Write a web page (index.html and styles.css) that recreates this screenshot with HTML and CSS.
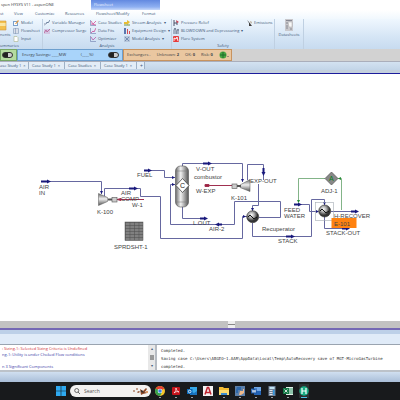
FILE: index.html
```html
<!DOCTYPE html>
<html lang="en">
<head>
	<meta charset="utf-8">
	<title>Aspen HYSYS V11 - aspenONE</title>
	<link rel="stylesheet" href="styles.css">
</head>
<body>
	<div class="app">
		<header class="titlebar">
			<span class="title">spen HYSYS V11 - aspenONE</span>
			<span class="context-tab">Flowsheet</span>
		</header>

		<nav class="menu">
			<a href="#" class="menu-first">st</a>
			<a href="#" class="menu-view">View</a>
			<a href="#" class="menu-customize">Customize</a>
			<a href="#" class="menu-resources">Resources</a>
			<a href="#" class="menu-modify">Flowsheet/Modify</a>
			<a href="#">Format</a>
		</nav>

		<div class="ribbon">
			<section class="group group-summaries">
				<div class="tools">
					<button class="big big-cut">
						<svg width="8" height="12" viewBox="0 0 8 12"><path d="M0 2h6v9H0z" fill="#f3c04e"/><path d="M0 4h6v3H0z" fill="#fbe6a0"/><path d="M0 2h6v9H0" fill="none" stroke="#d2953a" stroke-width=".6"/></svg>
						<span>nents</span>
					</button>
					<div class="col">
						<button><svg viewBox="0 0 6 6"><path d="M0 1h5v5H0z" fill="#7aa0cc"/><path d="M1 2h3v3H1z" fill="#fff"/><path d="M2 4l3-4 1 1-3 3z" fill="#e89a38"/></svg>Model</button>
						<button><svg viewBox="0 0 6 6"><path d="M.5.5h5v5h-5zM.5 2h5M.5 4h5M2.500 0v6" fill="#fff" stroke="#8095b5" stroke-width=".6"/></svg>Flowsheet</button>
						<button><svg viewBox="0 0 6 6"><path d="M1 .5h3l1 1v4H1z" fill="#fff" stroke="#a8b48a" stroke-width=".6"/></svg>Input</button>
					</div>
				</div>
				<h2>ummaries</h2>
			</section>
			<section class="group group-analysis">
				<div class="tools">
					<div class="col col-wide">
						<button><svg viewBox="0 0 6 6"><path d="M0 5l2-1 1-2 1 1 2-3" fill="none" stroke="#53698c" stroke-width=".8"/><path d="M0 3h2v2H0z" fill="#b6bfd0"/></svg>Variable Manager</button>
						<button><svg viewBox="0 0 6 6"><path d="M0 1h6v5H0z" fill="#d2c5e2"/><path d="M0 5l2-3 1 2 3-3" fill="none" stroke="#b85b92" stroke-width=".8"/></svg>Compressor Surge</button>
					</div>
					<div class="col col-case">
						<button><svg viewBox="0 0 6 6"><path d="M.5 0v5.500H6" fill="none" stroke="#7889b6" stroke-width=".7"/><path d="M1 1l2 3 3-3M1 4l5 1" fill="none" stroke="#d45096" stroke-width=".8"/></svg>Case Studies</button>
						<button><svg viewBox="0 0 6 6"><path d="M.5 0v5.500H6" fill="none" stroke="#7889b6" stroke-width=".7"/><path d="M1 5l2-2 1 1 2-4" fill="none" stroke="#c94c98" stroke-width=".8"/></svg>Data Fits</button>
						<button><svg viewBox="0 0 6 6"><path d="M.5 0v5.500H6" fill="none" stroke="#7889b6" stroke-width=".7"/><path d="M1 1l2 3 3-3" fill="none" stroke="#b95ba6" stroke-width=".8"/></svg>Optimizer</button>
					</div>
					<div class="col">
						<button><svg viewBox="0 0 6 6"><path d="M0 2h3V0l3 2-3 3V4H0z" fill="#e7bd35"/><path d="M0 5h6" stroke="#739245"/></svg>Stream Analysis <i>▾</i></button>
						<button><svg viewBox="0 0 6 6"><path d="M0 0h2v6H0z" fill="#5b78ae"/><path d="M3 1h1v5H3zM5 3h1v3H5z" fill="#d34d55"/></svg>Equipment Design <i>▾</i></button>
						<button><svg viewBox="0 0 6 6"><path d="M0 0h6v6H0z" fill="#b7c7dc"/><path d="M1 5l4-4M1 1l4 4" stroke="#6780a8" stroke-width=".8"/></svg>Model Analysis <i>▾</i></button>
					</div>
				</div>
				<h2>Analysis</h2>
			</section>
			<section class="group group-safety">
				<div class="tools">
					<div class="col col-relief">
						<button><svg viewBox="0 0 6 6"><path d="M1 0v6M1 3h3M4 1v4" stroke="#4d5168"/><path d="M3 0l3 2-2 1z" fill="#d63f50"/></svg>Pressure Relief</button>
						<button><svg viewBox="0 0 6 6"><path d="M1 6V2l1-2 1 2v4M4 6V3l1-2 1 2v3" fill="none" stroke="#68748a"/></svg>BLOWDOWN and Depressuring <i>▾</i></button>
						<button><svg viewBox="0 0 6 6"><rect width="6" height="6" rx="1" fill="#e63b3b"/><path d="M1 5V2l2 1 1-2 1 4" fill="none" stroke="#fff" stroke-width=".9"/></svg>Flare System</button>
					</div>
					<div class="col">
						<button><svg viewBox="0 0 6 6"><path d="M1 0l2 2 3 4H3V3z" fill="#403d3b"/><path d="M4 1l2 1-1 2z" fill="#b6a58b"/></svg>Emissions</button>
					</div>
				</div>
				<h2>Safety</h2>
			</section>
			<section class="group group-data">
				<button class="big">
					<svg width="10" height="12" viewBox="0 0 10 12"><path d="M1 0h8v12H1z" fill="#c9c8cc"/><path d="M2 1.500h6M2 4h6M2 7h2M2 9h2M6 10h2" stroke="#777984" stroke-width=".8"/><path d="M4 3h4v5H5z" fill="#f7f7f7" stroke="#999" stroke-width=".4"/></svg>
					<span>Datasheets</span>
				</button>
			</section>
		</div>

		<div class="status">
			<div class="panel panel-green"><button class="switch" aria-label="Capital"></button></div>
			<div class="panel panel-blue"><span>Energy Savings: ____MW</span><span>(____%)</span><button class="switch" aria-label="Energy"></button></div>
			<div class="panel panel-orange"><span>Exchangers -</span><span>Unknown: <b>2</b></span><span>OK: <b>0</b></span><span>Risk: <b>0</b></span>
				<svg width="10" height="8" viewBox="0 0 10 8"><circle cx="4" cy="4" r="3.500" fill="#49a642"/><path d="M1 4h6M4 1v6" stroke="#226b2a"/><path d="M8 5h2L9 6z" fill="#555"/></svg>
			</div>
		</div>

		<div class="tabs">
			<a href="#">ase Study 1 <i>×</i></a>
			<a href="#">Case Study 1 <i>×</i></a>
			<a href="#">Case Studies <i>×</i></a>
			<a href="#">Case Study 1 <i>×</i></a>
			<a href="#" class="plus">+</a>
		</div>

		<main class="canvas">
			<svg class="flowsheet" viewBox="0 74 400 247" preserveAspectRatio="xMinYMin meet">
				<defs>
					<linearGradient id="steel"><stop offset="0" stop-color="#666"/><stop offset=".4" stop-color="#f2f2f2"/><stop offset="1" stop-color="#555"/></linearGradient>
					<linearGradient id="cone" x2="0" y2="1"><stop offset="0" stop-color="#666"/><stop offset=".45" stop-color="#eee"/><stop offset="1" stop-color="#555"/></linearGradient>
					<radialGradient id="ball" cx=".4" cy=".35"><stop offset="0" stop-color="#fff"/><stop offset=".5" stop-color="#aaa"/><stop offset="1" stop-color="#333"/></radialGradient>
					<pattern id="cells" x="125" y="222" width="4.500" height="3" patternUnits="userSpaceOnUse"><path d="M0 0h4.500v3H0z" fill="#808080"/><path d="M0 .3h4.500M.3 0v3" stroke="#4c4c4c" stroke-width=".6"/></pattern>
				</defs>

				<!-- material streams -->
				<g class="stream">
					<path d="M41 181.500H101.500V194"/>
					<path d="M104.500 196V188.500H140.500V196.500H160.500V238.500H242.500V216.500H247"/>
					<path d="M144 170.500H164.500V177.500H175"/>
					<path d="M182.500 166V163.500H242.500V182"/>
					<path d="M182.500 207V218.500H207"/>
					<path d="M247.500 180V164.500H263.500V180"/>
					<path d="M258.500 184V205.500H252.500V211"/>
					<path d="M259 217.500H280.500V201.500H234.500V224.500H170.500V184.500H175"/>
					<path d="M252.500 223V236.500H311.500V199.500H324.500V205"/>
					<path d="M294 204.500H309.500V211.500H318"/>
					<path d="M331 211.500H358"/>
					<path d="M324.500 217V228.500H349"/>
				</g>
				<g class="energy"><path d="M119 199.500H144M205 185.500H232"/><path d="M117 199.500l4-1v2zM205 184.500h4v2h-4z"/></g>
				<g class="arrow">
					<path d="M41 180.500h6v-1l4 2-4 2v-1h-6z"/>
					<path d="M129 187.500h5v-1l4 2-4 2v-1h-5z"/>
					<path d="M144 169.500h4v-1l4 2-4 2v-1h-4z"/>
					<path d="M203 162.500h5v-1l4 2-4 2v-1h-5z"/>
					<path d="M200 217.500h4v-1l4 2-4 2v-1h-4z"/>
					<path d="M222 223.500h-3v-1l-4 2 4 2v-1h3z"/>
					<path d="M262.500 168v4h-1l2 4 2-4h-1v-4z"/>
					<path d="M286 235.500h5v-1l4 2-4 2v-1h-5z"/>
					<path d="M294 203.500h4v-1l4 2-4 2v-1h-4z"/>
					<path d="M351 210.500h4v-1l4 2-4 2v-1h-4z"/>
					<path d="M342 227.500h4v-1l4 2-4 2v-1h-4z"/>
					<path d="M100 191h3l-1.500 3zM241 179h3l-1.500 3zM172 176v3l3-1.500zM172 183v3l3-1.500zM251 208h3l-1.500 3zM323 202h3l-1.500 3zM243 215v3l3-1.500zM316 210v3l3-1.500z"/>
				</g>
				<g class="adjust"><path d="M298.500 202V178.500H325M337 178.500H341.500V210"/><path d="M297 200h3l-1.500 3zM341 177v3l-3-1.500z" class="adjust-tip"/></g>

				<!-- unit operations -->
				<path d="M98.500 193.500l9 4v4l-9 4z" fill="url(#cone)" stroke="#555" stroke-width=".5"/>
				<path d="M108 199.500h4" stroke="#555" stroke-width="2"/>
				<rect x="112" y="197.500" width="5" height="4.500" class="shaft"/>
				<path d="M240 185l10-5.500v12l-10-4z" fill="url(#cone)" stroke="#555" stroke-width=".5"/>
				<path d="M237 186h4" stroke="#555" stroke-width="2"/>
				<rect x="232" y="184" width="5" height="4.500" class="shaft"/>
				<rect x="175.500" y="166" width="13" height="41" rx="5" fill="url(#steel)" stroke="#555" stroke-width=".6"/>
				<path d="M175.500 171h13M175.500 202h13" stroke="#777" stroke-width=".5"/>
				<path d="M182.500 178.500l6.500 7-6.500 7-6.500-7z" fill="#fff" stroke="#333" stroke-width=".7"/>
				<text x="180" y="188" class="mark">C</text>
				<circle cx="252.700" cy="216.700" r="6" class="exchanger"/>
				<path d="M248 217l2-2 4 4 3-2" class="coil"/>
				<rect x="315.500" y="202.500" width="18" height="18" class="selection"/>
				<circle cx="324.700" cy="211" r="6" class="exchanger"/>
				<path d="M320 211l2-2 4 4 3-2" class="coil"/>
				<path d="M331.500 172l6.500 6.500-6.500 6.500-6.500-6.500z" fill="#888" stroke="#555" stroke-width=".7"/>
				<text x="329" y="181" class="mark mark-green">A</text>
				<rect x="125" y="222" width="18" height="18.500" fill="url(#cells)" stroke="#555" stroke-width=".5"/>
				<rect x="331.500" y="218" width="25" height="10" fill="#ff8210"/>

				<g class="labels">
					<text x="39" y="189">AIR</text><text x="39" y="195">IN</text>
					<text x="137" y="177">FUEL</text>
					<text x="121" y="195">AIR</text><text x="121" y="201">COMP</text>
					<text x="132" y="207">W-1</text>
					<text x="97" y="214">K-100</text>
					<text x="114" y="249">SPRDSHT-1</text>
					<text x="196" y="171">V-OUT</text>
					<text x="194" y="179">combustor</text>
					<text x="196" y="193">W-EXP</text>
					<text x="231" y="200">K-101</text>
					<text x="250" y="183">EXP-OUT</text>
					<text x="193" y="225">L OUT</text>
					<text x="209" y="231">AIR-2</text>
					<text x="262" y="231">Recuperator</text>
					<text x="278" y="243">STACK</text>
					<text x="284" y="212">FEED</text><text x="284" y="218">WATER</text>
					<text x="321" y="193">ADJ-1</text>
					<text x="334" y="218">H-RECOVER</text>
					<text x="334" y="226">E-101</text>
					<text x="326" y="235">STACK-OUT</text>
				</g>
			</svg>
		</main>

		<div class="splitter"><span class="grip"></span></div>
		<div class="frame"></div>

		<section class="messages">
			<div class="log log-status">
				<p class="error">: Sizing-1: Selected Sizing Criteria is Undefined</p>
				<p>ng-1: Utility is under Choked Flow conditions</p>
				<p class="last">n 3 Significant Components</p>
			</div>
			<div class="scroll"><i>▴</i><span></span><i>▾</i></div>
			<div class="log log-trace">
				<p>Completed.</p>
				<p>Saving case C:\Users\ABGEO~1.AAR\AppData\Local\Temp\AutoRecovery save of MGT-MicroGasTurbine</p>
				<p>completed.</p>
			</div>
		</section>
		<div class="footer"></div>

		<div class="taskbar">
			<button aria-label="Start"><svg viewBox="0 0 10 10"><path d="M0 0h4.700v4.700H0zM5.300 0H10v4.700H5.300zM0 5.300h4.700V10H0zM5.300 5.300H10V10H5.300z" fill="#2ea9f0"/></svg></button>
			<label class="search">
				<svg width="6" height="6" viewBox="0 0 6 6"><circle cx="2.700" cy="2.500" r="2" fill="none" stroke="#333" stroke-width=".7"/><path d="M4 4l2 2" stroke="#333" stroke-width=".7"/></svg>
				<input type="text" placeholder="Search" aria-label="Search">
				<svg width="18" height="10" viewBox="0 0 18 10"><path d="M1 5l1-1 1 1-1 1zM4 3l1-1 1 1-1 1zM5 6l2-1 1 1-2 1zM8 3l3 2 3-3 1 1-2 3 2 1-4 1-2 1z" fill="#8f4a28"/><path d="M9 4l2 1 1 2-3-1z" fill="#332e2b"/><circle cx="15" cy="6" r="1" fill="#d98543"/></svg>
			</label>
			<div class="apps">
				<button class="open" aria-label="Chrome"><svg viewBox="0 0 10 10"><circle cx="5" cy="5" r="5" fill="#f5c52c"/><path d="M5 5L.7 2.500a5 5 0 0 1 8.600 0z" fill="#e34133"/><path d="M5 5L.7 2.500A5 5 0 0 0 5 10l2-4z" fill="#34a04f"/><circle cx="5" cy="5" r="2.300" fill="#fff"/><circle cx="5" cy="5" r="1.800" fill="#3c7de6"/></svg></button>
				<button class="open" aria-label="Acrobat"><svg viewBox="0 0 10 10"><rect x="1" y="1" width="8" height="8" rx="1" fill="#c4141b"/><path d="M3 7c2-2 2-3 2-5 0 2 1 3 3 4-2-1-4 0-5 1z" fill="none" stroke="#fff" stroke-width=".7"/></svg></button>
				<button class="open" aria-label="Outlook"><svg viewBox="0 0 10 10"><path d="M3 1h7v8H3z" fill="#38a9e8"/><path d="M3 5l4 2 3-2v4H3z" fill="#1b73bd"/><path d="M0 3h5.500v5H0z" fill="#0968b8"/><circle cx="2.700" cy="5.500" r="1.300" fill="none" stroke="#fff" stroke-width=".8"/></svg></button>
				<button aria-label="AutoCAD"><svg viewBox="0 0 10 10"><path d="M0 0h10v10H0z" fill="#f4f2f2"/><path d="M2 8.500L4.400 1.500h1.200L8 8.500M3 6.500h4" fill="none" stroke="#bd2530" stroke-width="1.500"/></svg></button>
				<button class="open" aria-label="Files"><svg viewBox="0 0 10 10"><path d="M0 1h4l1 1h5v7H0z" fill="#f5bd34"/><path d="M0 4h10v5H0z" fill="#fcdc72"/><path d="M2 7h6v2H2z" fill="#3b8cd0"/></svg></button>
				<button class="open" aria-label="Python"><svg viewBox="0 0 10 10"><path d="M0 0h10v10H0z" fill="#5c7fa8"/><path d="M2 1h4v3H3v3H1V4z" fill="#2e68aa"/><path d="M5 5h3V3h1v4l-3 2H4z" fill="#efb98a"/></svg></button>
				<button class="open" aria-label="Word"><svg viewBox="0 0 10 10"><path d="M3 1h7v8H3z" fill="#71a7e5"/><path d="M3 5h7v4H3z" fill="#2464b5"/><path d="M0 2.500h6v5H0z" fill="#1b58a8"/><path d="M1 3.500l1 3 1-2.500 1 2.500 1-3" fill="none" stroke="#fff" stroke-width=".7"/></svg></button>
				<button class="open" aria-label="Calculator"><svg viewBox="0 0 10 10"><path d="M1.500 0h7v10h-7z" fill="#73849a"/><path d="M2.500 1h5v2h-5z" fill="#c2e3f2"/><path d="M2.500 4h3v1h-3zM2.500 6h3v1h-3zM2.500 8h3v1h-3z" fill="#dce4eb"/><path d="M6 4h1.500v5H6z" fill="#3498df"/></svg></button>
				<button class="open" aria-label="Excel"><svg viewBox="0 0 10 10"><path d="M3 1h7v8H3z" fill="#e1f0e7"/><path d="M6 3h4M6 5h4M6 7h4" stroke="#39966a"/><path d="M0 2h6v6H0z" fill="#147846"/><path d="M1.500 3.500l3 3M4.500 3.500l-3 3" stroke="#fff" stroke-width=".8"/></svg></button>
				<button class="open active" aria-label="HYSYS"><svg viewBox="0 0 10 10"><circle cx="5" cy="5" r="4.700" fill="#19ad84"/><path d="M3 2v6M7 2v6M3 5h4" stroke="#fff" stroke-width="1.200"/></svg></button>
			</div>
		</div>
	</div>
</body>
</html>
```
FILE: styles.css
```css
* {
	box-sizing: border-box;
}

body {
	margin: 0;
	font-family: "Open Sans", "Noto Sans", sans-serif;
	font-size: 4px;
	line-height: 8px;
	color: #3f5878;
	background: #fff;
}

button {
	border: 0;
	padding: 0;
	background: none;
	font: inherit;
	color: inherit;
}

a {
	color: inherit;
	text-decoration: none;
}

h2, p {
	margin: 0;
	font: inherit;
}

i {
	font-style: normal;
}

.app {
	display: flex;
	flex-direction: column;
	min-height: 100vh;
	overflow: hidden;
	white-space: nowrap;
}

/* title and menu */
.titlebar {
	display: flex;
	height: 10px;
	color: #333;
}

.title {
	width: 91px;
	padding-left: 1px;
	line-height: 9px;
}

.context-tab {
	width: 69px;
	padding-left: 3px;
	line-height: 10px;
	color: #e8f0ff;
	background: linear-gradient(#6289e0, #8fb0f2 70%, #c9dafa);
}

.menu {
	display: flex;
	height: 9px;
	background: linear-gradient(#fff, #f1f8fe);
}

.menu-first { width: 14px; }
.menu-view { width: 21px; }
.menu-customize { width: 30px; }
.menu-resources { width: 31px; }
.menu-modify { width: 46px; }

/* ribbon */
.ribbon {
	display: flex;
	height: 30px;
	background: linear-gradient(#eff7fe, #d5e5f5 60%, #c7dbef);
}

.group {
	display: flex;
	flex-direction: column;
	justify-content: space-between;
	flex: none;
	border-right: 1px solid #bfd0e2;
}

.group h2 {
	line-height: 6px;
	text-align: center;
}

.group-summaries { width: 43px; }
.group-summaries h2 { text-align: left; }
.group-analysis { width: 129px; }
.group-safety { width: 103px; }
.group-data { width: 29px; }

.tools {
	display: flex;
}

.col {
	display: flex;
	flex-direction: column;
}

.col button {
	display: flex;
	align-items: center;
	gap: 2px;
	height: 8px;
	padding-left: 1px;
}

.col svg {
	width: 6px;
	height: 6px;
}

.col-wide { width: 46px; }
.col-case { width: 34px; }
.col-relief { width: 73px; }

.big {
	display: flex;
	flex-direction: column;
	align-items: center;
}

.big-cut {
	width: 12px;
	align-items: flex-start;
}

/* status panels */
.status {
	display: flex;
	height: 13px;
	background: #d2d2d2;
	border-bottom: 1px solid #aaaebb;
}

.panel {
	display: flex;
	align-items: center;
	justify-content: space-between;
	border: 1px solid;
	color: #3a4045;
}

.panel-green {
	width: 17px;
	padding-left: 1px;
	background: #b4dba0;
	border-color: #76a765;
}

.panel-blue {
	width: 106px;
	padding: 0 3px 0 4px;
	background: #a9d4fa;
	border-color: #6d9fce;
}

.panel-orange {
	width: 109px;
	padding: 0 2px 0 3px;
	background: #eac7a0;
	border-color: #c8935e;
}

.switch {
	width: 11px;
	height: 6px;
	border: 1px solid #333;
	border-radius: 3px;
	background: linear-gradient(90deg, #222 60%, #ccc 60%);
}

.tabs {
	display: flex;
	height: 12px;
	background: linear-gradient(#d3e2f1, #c3d5e8 70%, #c4d0dd 70%);
	border-bottom: 1px solid #1c1c9c;
}

.tabs a {
	height: 7px;
	width: 36px;
	padding-left: 3px;
	border-right: 1px solid #9eb1c6;
	background: #e3edf7;
}

.tabs a:first-child {
	width: 29px;
	padding-left: 0;
}

.tabs i {
	margin-left: 1px;
}

.tabs .plus {
	width: 8px;
	font-size: 5px;
}

/* flowsheet */
.canvas {
	flex: 1;
	background: #fff;
}

.flowsheet {
	display: block;
	width: 100%;
	font-family: "Liberation Sans", Arial, sans-serif;
}

.stream path {
	fill: none;
	stroke: #6668a0;
	stroke-width: 1;
}

.arrow {
	fill: #19197c;
}

.energy {
	fill: #a02040;
	stroke: #a03050;
}

.adjust path {
	fill: none;
	stroke: #83b488;
}

.adjust .adjust-tip {
	fill: #258b35;
	stroke: none;
}

.shaft {
	fill: #ccc;
	stroke: #555;
	stroke-width: .6px;
}

.exchanger {
	fill: url(#ball);
	stroke: #333;
	stroke-width: .6px;
}

.coil {
	fill: none;
	stroke: #111;
}

.selection {
	fill: none;
	stroke: #a3aab3;
	stroke-width: .6px;
}

.labels {
	font-size: 6px;
	fill: #444;
}

.mark {
	font-size: 7px;
	fill: #222;
}

.mark-green {
	fill: #087c20;
}

.splitter {
	height: 7px;
	background: #c2c2c2;
}

.grip {
	display: block;
	width: 7px;
	height: 7px;
	margin-left: 57%;
	background: linear-gradient(#eee 40%, #888 40%, #888 55%, #eee 55%);
}

.frame {
	height: 17px;
	border-top: 2px solid #7468b4;
	border-bottom: 1px solid #9aa4b0;
	background: linear-gradient(#bdd0e8 30%, #e0ebf8 30%);
}

/* message panes */
.messages {
	display: flex;
	height: 25px;
	background: #fff;
}

.log {
	overflow: hidden;
}

.log-status {
	width: 148px;
	line-height: 6px;
	padding: 1px 0 0 2px;
	color: #3c3ca8;
}

.log-status .error {
	color: #d03038;
}

.log-status .last {
	margin-top: 6px;
}

.scroll {
	display: flex;
	flex-direction: column;
	align-items: center;
	justify-content: space-between;
	width: 9px;
	background: #e8e8e8;
	border-right: 2px solid #b7bcc3;
}

.scroll span {
	width: 4px;
	height: 5px;
	background: #999;
}

.log-trace {
	flex: 1;
	padding: 2px 0 0 4px;
	font-family: "DejaVu Sans Mono", monospace;
	color: #333;
}

.footer {
	height: 12px;
	border-top: 2px solid #bcc2c9;
	background: linear-gradient(#d0dff0, #a9bed8);
}

/* taskbar */
.taskbar {
	display: flex;
	align-items: center;
	height: 18px;
	padding-left: 56px;
	background: #181a1c;
}

.taskbar button {
	display: flex;
	flex-direction: column;
	align-items: center;
	justify-content: flex-end;
	gap: 1px;
	width: 10px;
	height: 14px;
	padding-bottom: 2px;
}

.taskbar button svg {
	flex: none;
	width: 10px;
	height: 10px;
}

.taskbar .open {
	padding-bottom: 0;
}

.taskbar .open::after {
	content: "";
	width: 2px;
	height: 1px;
	background: #9a9ca0;
}

.taskbar .active {
	background: #2c3031;
}

.taskbar .active::after {
	width: 6px;
	background: #4cc2e8;
}

.search {
	display: flex;
	align-items: center;
	gap: 4px;
	width: 81px;
	height: 12px;
	margin-left: 4px;
	padding: 0 1px 0 4px;
	border-radius: 6px;
	background: #f3f2f1;
}

.search input {
	flex: 1;
	min-width: 0;
	padding: 0;
	border: 0;
	background: none;
	font: inherit;
	font-size: 5px;
}

.search input::placeholder {
	color: #555;
}

.apps {
	display: flex;
	gap: 6px;
	margin-left: 4px;
}
```
